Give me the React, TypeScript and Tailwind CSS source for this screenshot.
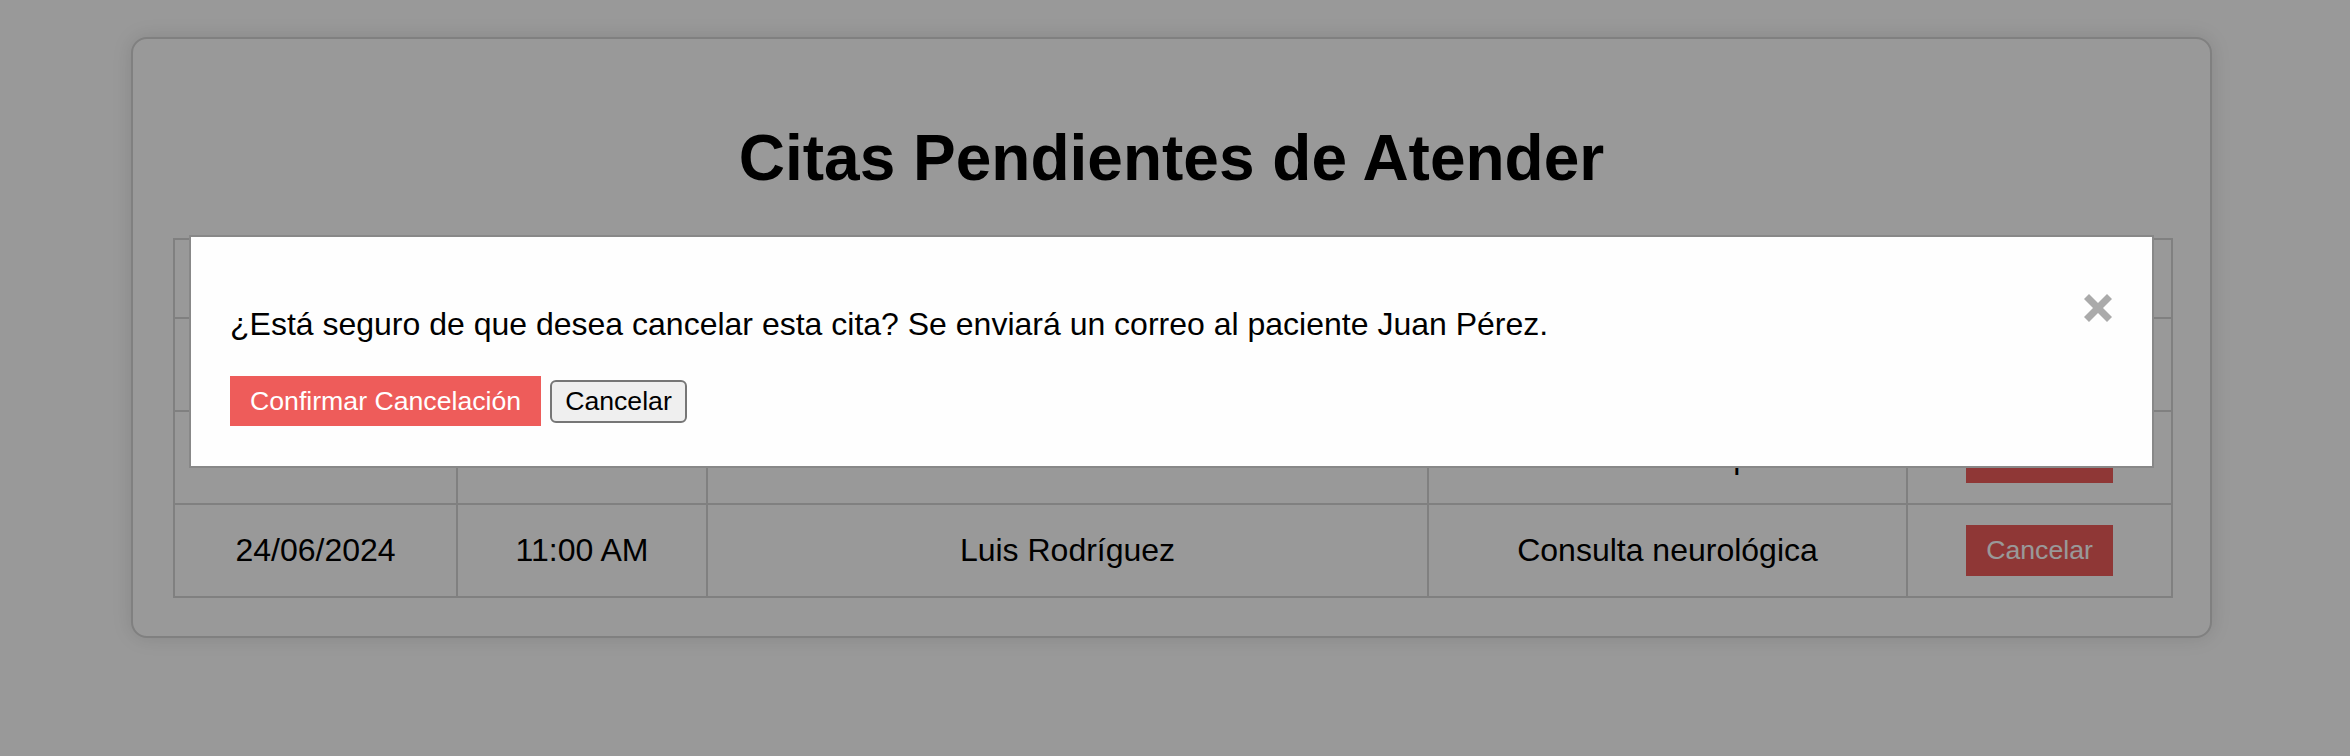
const rows = [
  { fecha: "22/06/2024", hora: "09:00 AM", paciente: "Juan Pérez", motivo: "Consulta general" },
  { fecha: "23/06/2024", hora: "10:30 AM", paciente: "Ana Martínez", motivo: "Revisión de espalda" },
  { fecha: "24/06/2024", hora: "11:00 AM", paciente: "Luis Rodríguez", motivo: "Consulta neurológica" },
];

const cell = "border-2 border-[#d5d5d5] px-[20px] py-[20px] text-center align-middle";

const CloseIcon = () => (
  <svg width="28" height="28" viewBox="0 0 28 28" className="block">
    <line x1="2.5" y1="2.5" x2="25.5" y2="25.5" stroke="#aaaaaa" strokeWidth="7" />
    <line x1="25.5" y1="2.5" x2="2.5" y2="25.5" stroke="#aaaaaa" strokeWidth="7" />
  </svg>
);

const App = () => {
  return (
    <div className="relative min-h-screen bg-white font-['Liberation_Sans',Arial,sans-serif] text-black">
      <div className="pt-[37px] pl-[131px]">
        <div className="w-[2081px] rounded-[16px] border-2 border-[#d5d5d5] bg-white px-[40px] pt-[40px] pb-[38px] shadow-[0_0_20px_rgba(0,0,0,0.12)]">
          <h1 className="mt-[42px] mb-[43px] text-center text-[64px] font-bold leading-[74px]">
            Citas Pendientes de Atender
          </h1>

          <table className="w-[1998px] table-fixed border-collapse text-[32px] leading-[37px]">
            <colgroup>
              <col className="w-[283px]" />
              <col className="w-[250px]" />
              <col className="w-[721px]" />
              <col className="w-[479px]" />
              <col className="w-[265px]" />
            </colgroup>
            <thead>
              <tr>
                <th className={cell}>Fecha</th>
                <th className={cell}>Hora</th>
                <th className={cell}>Paciente</th>
                <th className={cell}>Motivo</th>
                <th className={cell}>Acciones</th>
              </tr>
            </thead>
            <tbody>
              {rows.map((r) => (
                <tr key={r.fecha}>
                  <td className={cell}>{r.fecha}</td>
                  <td className={cell}>{r.hora}</td>
                  <td className={cell}>{r.paciente}</td>
                  <td className={cell}>{r.motivo}</td>
                  <td className={cell}>
                    <button className="mx-auto block bg-[#ee5c5a] px-[20px] py-[10px] text-[26.67px] leading-[31px] text-white">
                      Cancelar
                    </button>
                  </td>
                </tr>
              ))}
            </tbody>
          </table>
        </div>
      </div>

      {/* modal de confirmación */}
      <div className="fixed inset-0 bg-black/40">
        <div className="absolute left-[189px] top-[235px] w-[1965px] border-2 border-[#888888] bg-[#fefefe] py-[40px] pl-[39px] pr-[40px]">
          <div className="absolute right-[40px] top-[57px]">
            <CloseIcon />
          </div>
          <p className="mt-[29px] text-[32px] leading-[36px]">
            ¿Está seguro de que desea cancelar esta cita? Se enviará un correo al paciente Juan Pérez.
          </p>
          <div className="mt-[34px] flex items-center gap-[9px]">
            <button className="h-[50px] bg-[#ee5c5a] px-[20px] text-[26.67px] leading-[30px] text-white">
              Confirmar Cancelación
            </button>
            <button className="h-[43px] rounded-[6px] border-2 border-[#767676] bg-[#efefef] px-[13px] text-[26.67px] leading-[30px] text-black">
              Cancelar
            </button>
          </div>
        </div>
      </div>
    </div>
  );
};

export default App;
